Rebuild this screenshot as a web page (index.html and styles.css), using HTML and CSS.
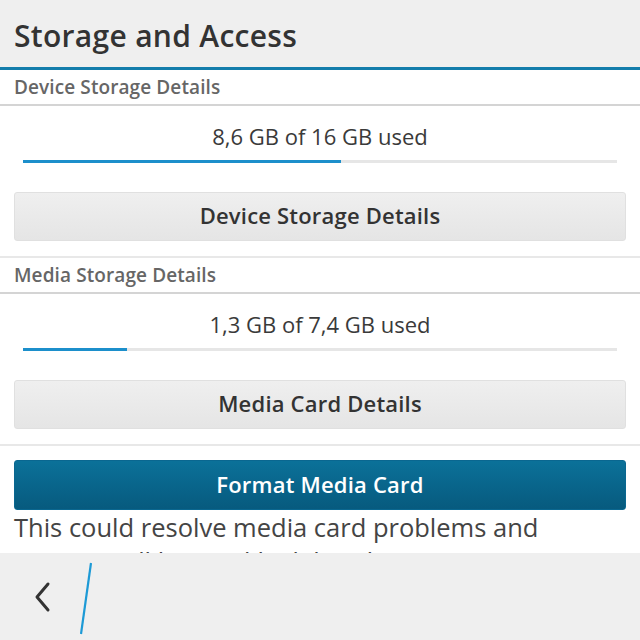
FILE: index.html
```html
<!DOCTYPE html>
<html>
<head>
<meta charset="utf-8">
<link rel="stylesheet" href="styles.css">
</head>
<body>
<div class="screen">
  <header class="titlebar"><h1 class="title">Storage and Access</h1></header>
  <main class="content">
    <div class="section-label">Device Storage Details</div>
    <section class="storage">
      <div class="usage">8,6 GB of 16 GB used</div>
      <div class="bar"><div class="fill" style="width:53.5%"></div></div>
      <button class="btn">Device Storage Details</button>
    </section>
    <div class="section-label">Media Storage Details</div>
    <section class="storage">
      <div class="usage">1,3 GB of 7,4 GB used</div>
      <div class="bar"><div class="fill" style="width:17.5%"></div></div>
      <button class="btn">Media Card Details</button>
    </section>
    <section class="format">
      <button class="btn btn-primary">Format Media Card</button>
      <p class="note">This could resolve media card problems and content will be quickly deleted.</p>
    </section>
  </main>
  <footer class="actionbar">
    <div class="back">
      <svg width="20" height="32" viewBox="0 0 20 32"><path d="M15 3 L4 16 L15 29" fill="none" stroke="#333" stroke-width="3" stroke-linecap="round" stroke-linejoin="round"/></svg>
    </div>
    <svg class="divider" width="16" height="74" viewBox="0 0 16 74"><line x1="13" y1="1" x2="3" y2="72" stroke="#1d9ad6" stroke-width="2.2"/></svg>
  </footer>
</div>
</body>
</html>
```
FILE: styles.css
```css
* { box-sizing: border-box; }
html, body { margin: 0; padding: 0; }
body {
  font-family: "Open Sans", "DejaVu Sans", sans-serif;
  background: #fff;
  color: #333;
}
.screen {
  width: 640px;
  height: 640px;
  display: flex;
  flex-direction: column;
  overflow: hidden;
}
.titlebar {
  height: 70px;
  flex: none;
  background: #efefef;
  border-bottom: 3px solid #137dab;
  display: flex;
  align-items: center;
  padding: 0 14px;
}
.title {
  margin: 0;
  font-size: 30px;
  font-weight: 600;
  color: #333;
  letter-spacing: 0.3px;
  padding-top: 3px;
}
.content {
  flex: 1;
  overflow: hidden;
}
.section-label {
  height: 36px;
  padding: 0 14px;
  font-size: 19px;
  font-weight: 600;
  color: #666;
  letter-spacing: 0.1px;
  line-height: 35px;
  border-bottom: 2px solid #d4d4d4;
}
.storage {
  padding: 0 14px;
  border-bottom: 2px solid #e8e8e8;
  height: 152px;
  display: flex;
  flex-direction: column;
}
.usage {
  text-align: center;
  font-size: 22px;
  color: #3a3a3a;
  margin-top: 15px;
  line-height: 30px;
}
.bar {
  margin: 9px 9px 0 9px;
  height: 3px;
  background: #e6e6e6;
}
.fill {
  height: 100%;
  background: #1c8fcb;
}
.btn {
  display: block;
  width: 100%;
  height: 49px;
  margin-top: 29px;
  border: 1px solid #e0e0e0;
  border-radius: 3px;
  background: linear-gradient(#efefef, #e5e5e5);
  font-family: inherit;
  font-size: 22px;
  font-weight: 600;
  color: #333;
  letter-spacing: 0.2px;
  padding: 0 0 3px 0;
}
.format {
  padding: 14px 14px 0 14px;
}
.format .btn {
  margin-top: 0;
}
.btn-primary {
  background: linear-gradient(#0b7199, #075a7e);
  border: 1px solid #0a6790;
  color: #fff;
  height: 50px;
}
.note {
  margin: 0;
  max-width: 570px;
  font-size: 25.5px;
  line-height: 34px;
  color: #444;
}
.actionbar {
  height: 87px;
  flex: none;
  background: #efefef;
  display: flex;
  align-items: center;
  padding-left: 33px;
}
.back {
  width: 20px;
  height: 32px;
  display: flex;
}
.divider {
  margin-left: 25px;
  margin-top: 4px;
}
```
